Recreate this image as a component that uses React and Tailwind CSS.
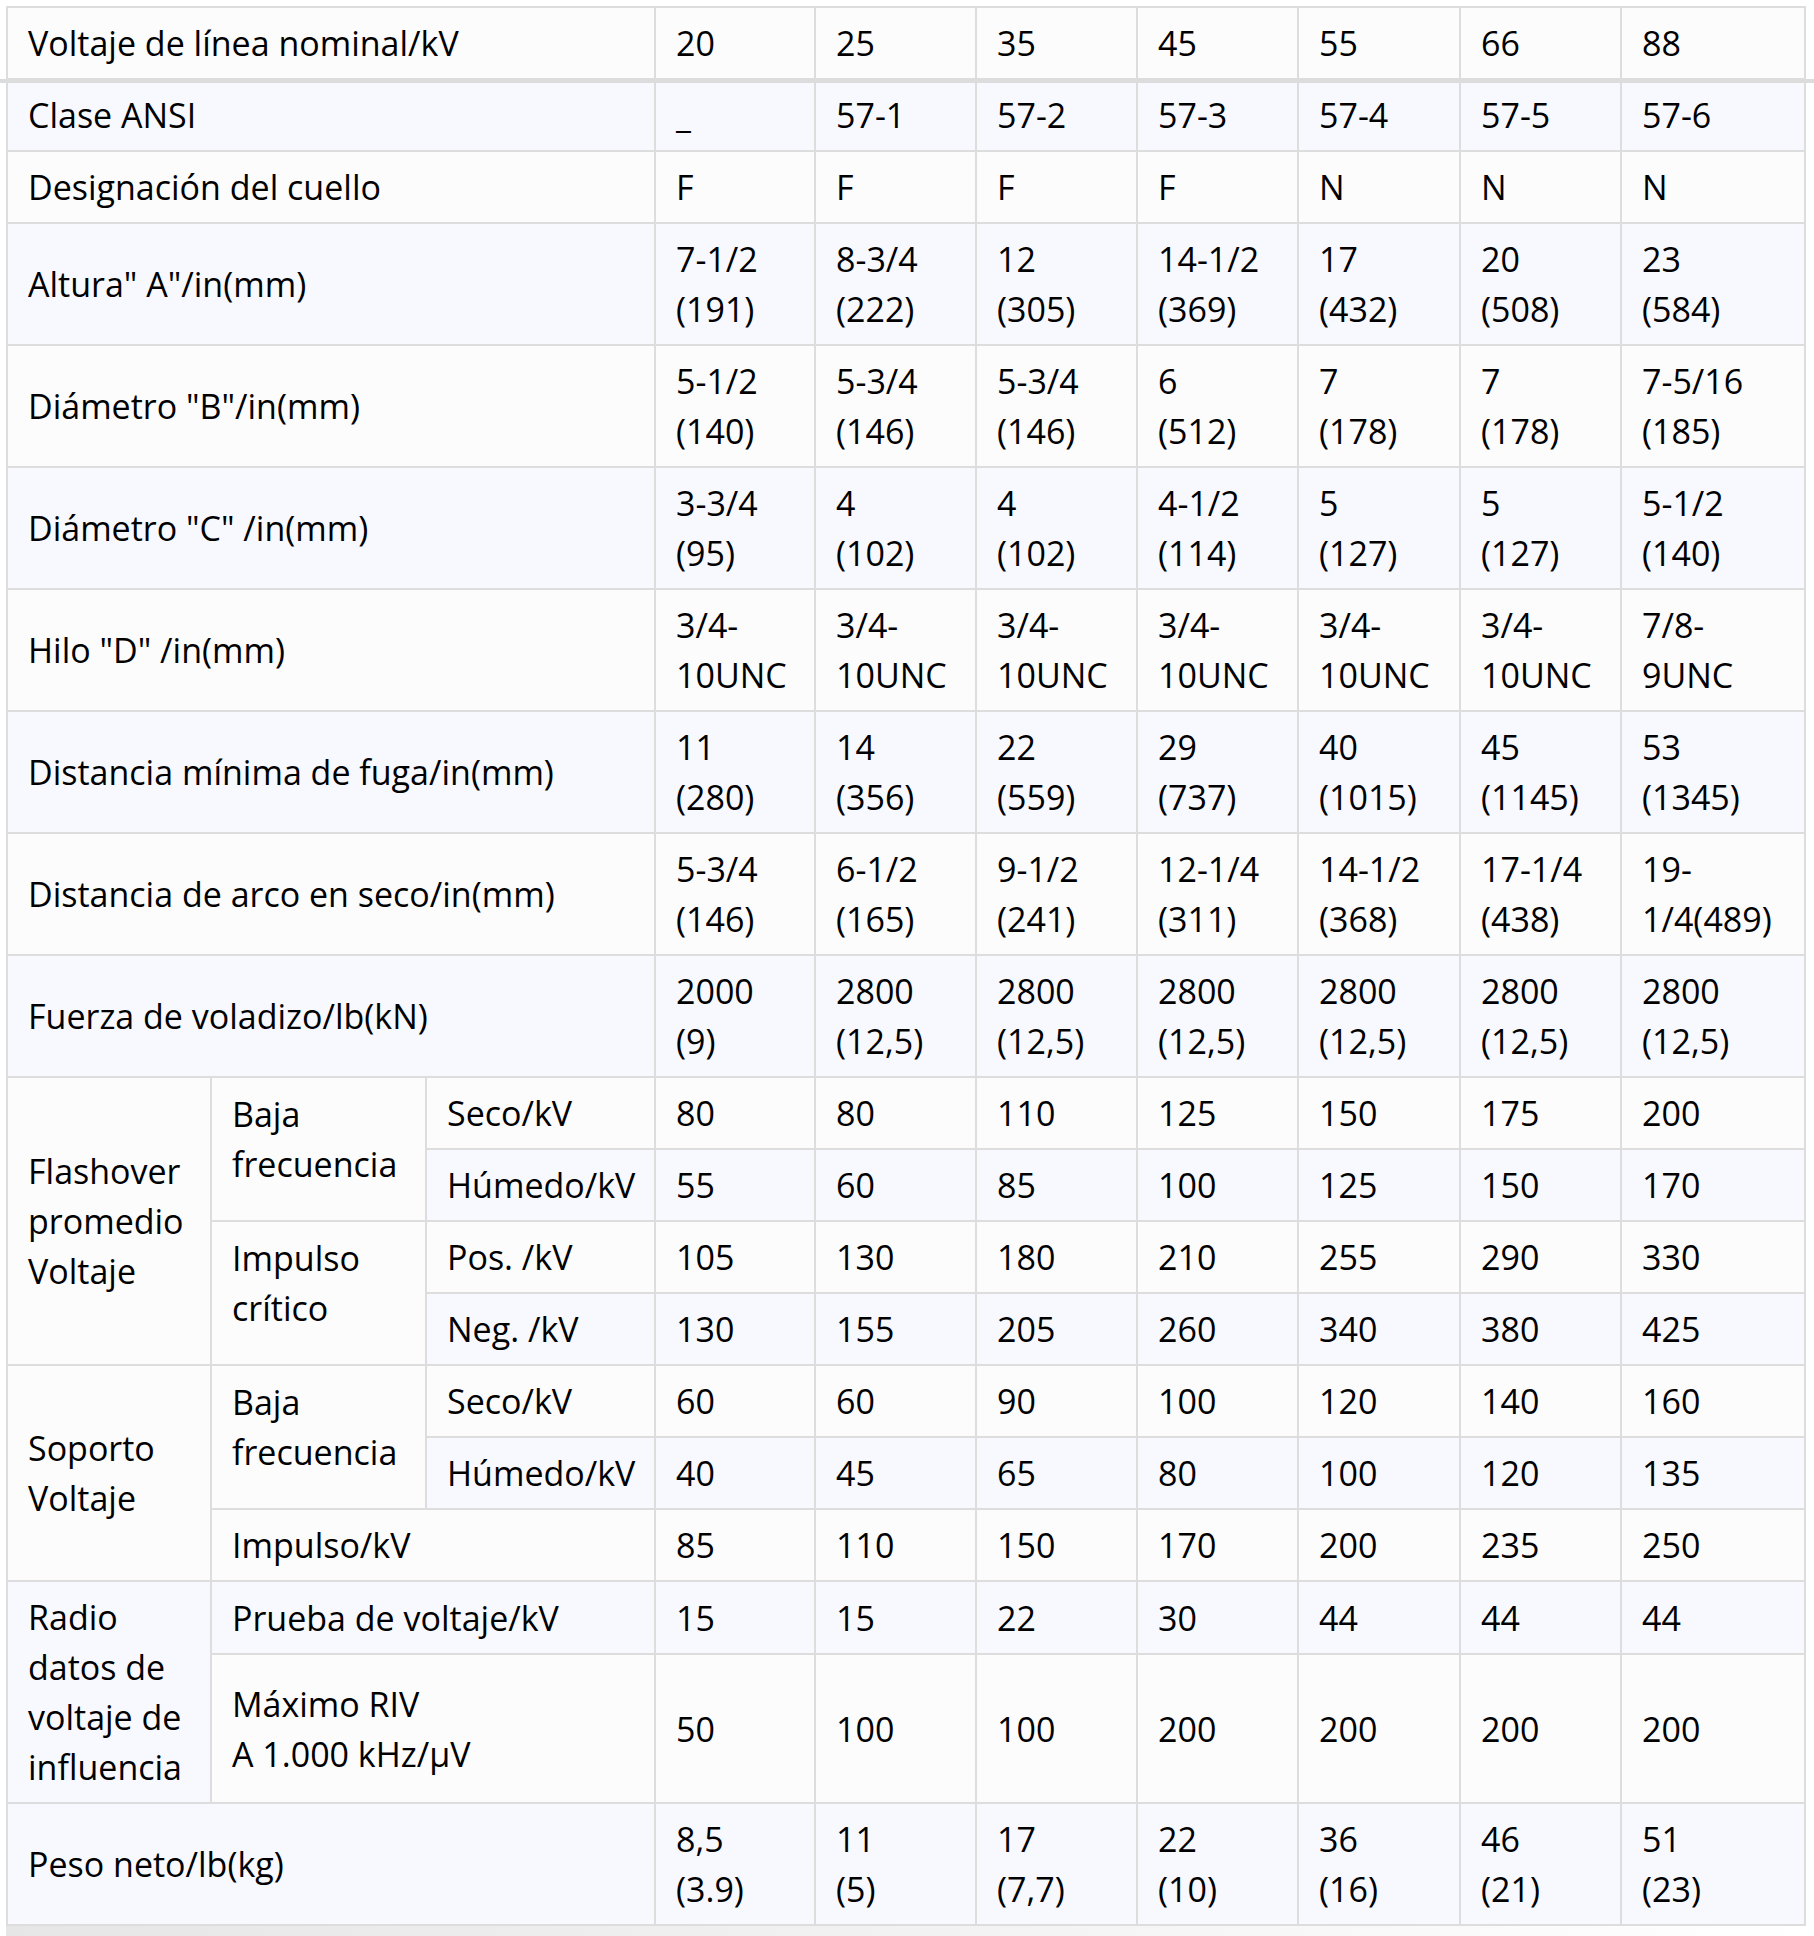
const cols = [204, 215, 229, 160, 161, 161, 161, 162, 161, 184];

const cell = "border-2 border-[#dddddd] px-5 py-2.5 align-middle text-left font-medium";
// two-line sub-group labels sit a little above centre in the original
const raised = "border-2 border-[#dddddd] px-5 pt-2.5 pb-[30px] align-middle text-left font-medium";

const Lines = ({ v }) => {
  const parts = Array.isArray(v) ? v : [v];
  return parts.map((p, i) => (
    <span key={i} className="block whitespace-nowrap">
      {p}
    </span>
  ));
};

// label cells: [text, colSpan, rowSpan, raised]
const rows = [
  { label: [["Clase ANSI", 3]], data: ["_", "57-1", "57-2", "57-3", "57-4", "57-5", "57-6"] },
  { label: [["Designación del cuello", 3]], data: ["F", "F", "F", "F", "N", "N", "N"] },
  {
    label: [['Altura" A"/in(mm)', 3]],
    data: [["7-1/2", "(191)"], ["8-3/4", "(222)"], ["12", "(305)"], ["14-1/2", "(369)"], ["17", "(432)"], ["20", "(508)"], ["23", "(584)"]],
  },
  {
    label: [['Diámetro "B"/in(mm)', 3]],
    data: [["5-1/2", "(140)"], ["5-3/4", "(146)"], ["5-3/4", "(146)"], ["6", "(512)"], ["7", "(178)"], ["7", "(178)"], ["7-5/16", "(185)"]],
  },
  {
    label: [['Diámetro "C" /in(mm)', 3]],
    data: [["3-3/4", "(95)"], ["4", "(102)"], ["4", "(102)"], ["4-1/2", "(114)"], ["5", "(127)"], ["5", "(127)"], ["5-1/2", "(140)"]],
  },
  {
    label: [['Hilo "D" /in(mm)', 3]],
    data: [["3/4-", "10UNC"], ["3/4-", "10UNC"], ["3/4-", "10UNC"], ["3/4-", "10UNC"], ["3/4-", "10UNC"], ["3/4-", "10UNC"], ["7/8-", "9UNC"]],
  },
  {
    label: [["Distancia mínima de fuga/in(mm)", 3]],
    data: [["11", "(280)"], ["14", "(356)"], ["22", "(559)"], ["29", "(737)"], ["40", "(1015)"], ["45", "(1145)"], ["53", "(1345)"]],
  },
  {
    label: [["Distancia de arco en seco/in(mm)", 3]],
    data: [["5-3/4", "(146)"], ["6-1/2", "(165)"], ["9-1/2", "(241)"], ["12-1/4", "(311)"], ["14-1/2", "(368)"], ["17-1/4", "(438)"], ["19-", "1/4(489)"]],
  },
  {
    label: [["Fuerza de voladizo/lb(kN)", 3]],
    data: [["2000", "(9)"], ["2800", "(12,5)"], ["2800", "(12,5)"], ["2800", "(12,5)"], ["2800", "(12,5)"], ["2800", "(12,5)"], ["2800", "(12,5)"]],
  },
  {
    label: [
      [["Flashover", "promedio", "Voltaje"], 1, 4],
      [["Baja", "frecuencia"], 1, 2, true],
      ["Seco/kV", 1],
    ],
    data: ["80", "80", "110", "125", "150", "175", "200"],
  },
  { label: [["Húmedo/kV", 1]], data: ["55", "60", "85", "100", "125", "150", "170"] },
  {
    label: [
      [["Impulso", "crítico"], 1, 2, true],
      ["Pos. /kV", 1],
    ],
    data: ["105", "130", "180", "210", "255", "290", "330"],
  },
  { label: [["Neg. /kV", 1]], data: ["130", "155", "205", "260", "340", "380", "425"] },
  {
    label: [
      [["Soporto", "Voltaje"], 1, 3],
      [["Baja", "frecuencia"], 1, 2, true],
      ["Seco/kV", 1],
    ],
    data: ["60", "60", "90", "100", "120", "140", "160"],
  },
  { label: [["Húmedo/kV", 1]], data: ["40", "45", "65", "80", "100", "120", "135"] },
  { label: [["Impulso/kV", 2]], data: ["85", "110", "150", "170", "200", "235", "250"] },
  {
    label: [
      [["Radio", "datos de", "voltaje de", "influencia"], 1, 2],
      ["Prueba de voltaje/kV", 2],
    ],
    data: ["15", "15", "22", "30", "44", "44", "44"],
  },
  {
    tall: true,
    label: [[["Máximo RIV", "A 1.000 kHz/μV"], 2]],
    data: ["50", "100", "100", "200", "200", "200", "200"],
  },
  {
    label: [["Peso neto/lb(kg)", 3]],
    data: [["8,5", "(3.9)"], ["11", "(5)"], ["17", "(7,7)"], ["22", "(10)"], ["36", "(16)"], ["46", "(21)"], ["51", "(23)"]],
  },
];

export default function App() {
  return (
    <div
      className="relative min-h-screen bg-white pt-[6px] pl-[6px] text-black"
      style={{ fontFamily: '"Open Sans", "Liberation Sans", sans-serif' }}
    >
      <table className="w-[1800px] table-fixed border-collapse border-2 border-[#dddddd] text-[34px] leading-[50px]">
        <colgroup>
          {cols.map((w, i) => (
            <col key={i} style={{ width: w }} />
          ))}
        </colgroup>
        <thead>
          <tr className="bg-[#fcfcfc]">
            <th colSpan={3} className={cell}>
              Voltaje de línea nominal/kV
            </th>
            {["20", "25", "35", "45", "55", "66", "88"].map((v) => (
              <th key={v} className={cell}>
                {v}
              </th>
            ))}
          </tr>
        </thead>
        <tbody>
          {rows.map((r, i) => (
            <tr
              key={i}
              className={`${i % 2 === 0 ? "bg-[#f8f9fe]" : "bg-[#fcfcfc]"} ${r.tall ? "h-[149px]" : ""}`}
            >
              {r.label.map(([t, cs, rs, up], j) => (
                <td key={"l" + j} colSpan={cs} rowSpan={rs || 1} className={up ? raised : cell}>
                  <Lines v={t} />
                </td>
              ))}
              {r.data.map((v, j) => (
                <td key={j} className={cell}>
                  <Lines v={v} />
                </td>
              ))}
            </tr>
          ))}
        </tbody>
      </table>
      <div className="h-[12px] w-full bg-gradient-to-r from-[#e6e6e6] via-[#f2f2f2] to-white" />
      <div className="pointer-events-none absolute left-0 right-0 top-[79px] h-[4px] bg-[#dcdcdc]" />
    </div>
  );
}
